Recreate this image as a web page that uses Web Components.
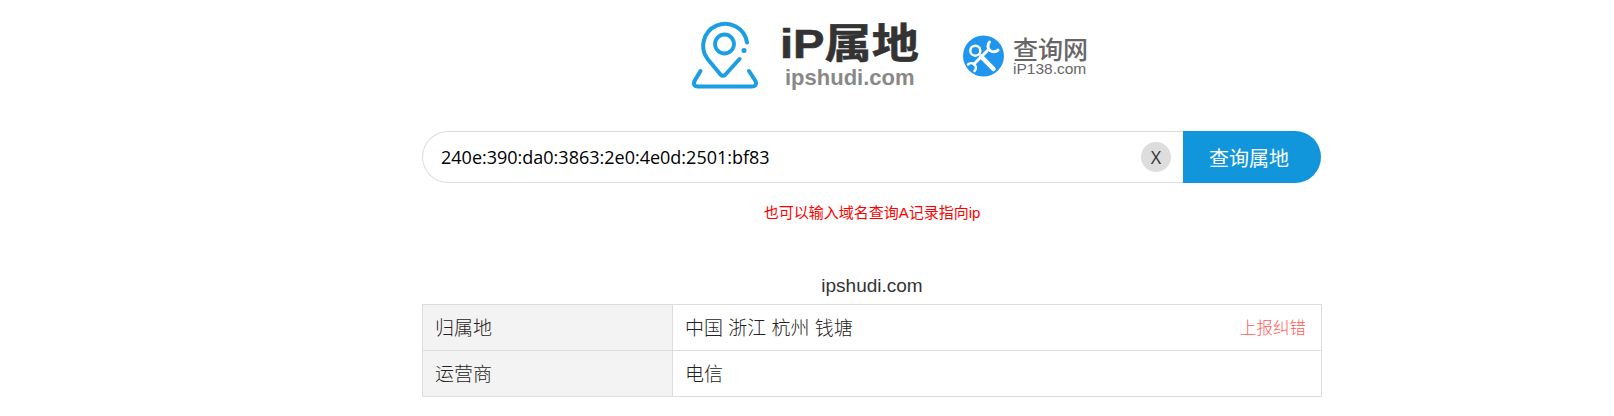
<!DOCTYPE html>
<html lang="zh">
<head>
<meta charset="utf-8">
<title>IP属地查询</title>
<style>
  body { margin: 0; background: #fff; font-family: "Liberation Sans", "Noto Sans CJK SC", sans-serif; color: #333; }
</style>
</head>
<body>
<ip-page>
  <ip-logos></ip-logos>
  <ip-search value="240e:390:da0:3863:2e0:4e0d:2501:bf83"></ip-search>
  <ip-hint>也可以输入域名查询A记录指向ip</ip-hint>
  <ip-result caption="ipshudi.com">
    <ip-row label="归属地" report>中国 浙江 杭州 钱塘</ip-row>
    <ip-row label="运营商">电信</ip-row>
  </ip-result>
</ip-page>

<script>
const CJK = '"Noto Sans CJK SC", sans-serif';

class IpPage extends HTMLElement {
  constructor() {
    super();
    this.attachShadow({mode: 'open'}).innerHTML = `
<style>
:host { display: block; width: 900px; margin-left: 422px; }
</style>
<slot></slot>`;
  }
}

class IpLogos extends HTMLElement {
  constructor() {
    super();
    this.attachShadow({mode: 'open'}).innerHTML = `
<style>
:host { display: flex; height: 131px; padding-left: 270px; box-sizing: border-box; align-items: flex-start; }
.main { display: flex; width: 271px; padding-top: 20px; }
.pin { width: 70px; height: 70px; flex: none; }
.words { margin-left: 18px; display: flex; flex-direction: column; align-items: flex-start; }
.big { font: 700 41px/44px "Liberation Sans", "Noto Sans CJK SC", sans-serif; color: #333; -webkit-text-stroke: .6px #333; margin-top: 2px; white-space: nowrap; transform: scaleX(1.15); transform-origin: left center; }
.small { font: 700 22px/25px "Liberation Sans", sans-serif; color: #888; margin: -1px 0 0 5px; white-space: nowrap; }
.other { display: flex; padding-top: 35px; }
.tool { width: 42px; height: 42px; flex: none; }
.other .words { margin-left: 8px; }
.cn { font: 500 25px/27px "Noto Sans CJK SC", sans-serif; color: #666; white-space: nowrap; }
.en { font: 400 15.500px/14px "Liberation Sans", sans-serif; color: #666; white-space: nowrap; }
</style>
<div class="main">
  <svg class="pin" viewBox="0 0 70 70" fill="none" stroke="#1c9fe2" stroke-linecap="round" stroke-linejoin="round">
    <path stroke-width="4" d="M55 22.500 A22 22 0 1 0 16 39.500 L28.500 54.500 Q31 57 33.500 54.500 L47.500 39"/>
    <circle cx="52" cy="30.500" r="1.500" fill="#1c9fe2" stroke-width="2"/>
    <circle cx="32.500" cy="24" r="9.500" stroke-width="3.800"/>
    <path stroke-width="4" d="M8.500 51 L2.500 61 Q0.500 66.500 6 66.500 L59.500 66.500 Q65.500 66.500 63.500 61 L57 51"/>
  </svg>
  <div class="words">
    <div class="big">iP属地</div>
    <div class="small">ipshudi.com</div>
  </div>
</div>
<div class="other">
  <svg class="tool" viewBox="0 0 42 42">
    <circle cx="20.500" cy="21" r="20.500" fill="#2196ee"/>
    <g fill="none" stroke="#fff" stroke-linecap="round">
      <circle cx="12.300" cy="15.700" r="5" stroke-width="2.500"/>
      <path stroke-width="4.500" d="M18.300 21.700 L30.500 34"/>
      <path stroke-width="3" d="M24.300 15.700 L11 29"/>
      <path stroke-width="3" d="M26.500 7 A5.500 5.500 0 0 0 35 15"/>
      <path stroke-width="2.500" d="M5 29.500 A4.500 4.500 0 0 1 11.500 36"/>
    </g>
  </svg>
  <div class="words">
    <div class="cn">查询网</div>
    <div class="en">iP138.com</div>
  </div>
</div>`;
  }
}

class IpSearch extends HTMLElement {
  constructor() {
    super();
    this.attachShadow({mode: 'open'}).innerHTML = `
<style>
:host { display: flex; width: 900px; height: 52px; box-sizing: border-box; }
.field { flex: 1; display: flex; align-items: center; border: 1px solid #ddd; border-right: 0; border-radius: 26px 0 0 26px; padding: 0 12px 0 18px; }
input { flex: 1; min-width: 0; border: 0; outline: 0; padding: 0; background: none; color: #000; font: 400 18px "Open Sans", ${CJK}; }
.clear { width: 30px; height: 30px; border-radius: 50%; background: #ddd; color: #333; border: 0; padding: 0; font: 400 18px/30px "Open Sans", sans-serif; text-align: center; }
.go { width: 138px; flex: none; border: 0; padding: 0 6px 0 0; margin-right: 1px; background: #1296db; color: #fff; border-radius: 0 26px 26px 0; font: 400 20px "Noto Sans CJK SC", sans-serif; }
</style>
<div class="field">
  <input type="text">
  <button class="clear">X</button>
</div>
<button class="go">查询属地</button>`;
    this.shadowRoot.querySelector('input').value = this.getAttribute('value');
  }
}

class IpHint extends HTMLElement {
  constructor() {
    super();
    this.attachShadow({mode: 'open'}).innerHTML = `
<style>
:host { display: block; margin-top: 20px; height: 20px; text-align: center; color: #f00; font: 400 15px/20px "Liberation Sans", ${CJK}; }
</style>
<slot></slot>`;
  }
}

class IpResult extends HTMLElement {
  constructor() {
    super();
    this.attachShadow({mode: 'open'}).innerHTML = `
<style>
:host { display: block; margin-top: 48px; }
.caption { height: 33px; text-align: center; font: 400 19px/30px "Liberation Sans", ${CJK}; color: #333; }
.rows { border: 1px solid #ddd; border-bottom: 0; }
</style>
<div class="caption"></div>
<div class="rows"><slot></slot></div>`;
    this.shadowRoot.querySelector('.caption').textContent = this.getAttribute('caption');
  }
}

class IpRow extends HTMLElement {
  constructor() {
    super();
    this.attachShadow({mode: 'open'}).innerHTML = `
<style>
:host { display: grid; grid-template-columns: 250px 1fr; grid-template-rows: 45px; height: 46px; box-sizing: border-box; border-bottom: 1px solid #ddd; font: 300 19px/47px "Liberation Sans", ${CJK}; color: #222; }
.label { background: #f3f3f3; border-right: 1px solid #ddd; padding-left: 12px; }
.value { display: flex; justify-content: space-between; padding: 0 15px 0 12px; }
a { color: #ff5a5a; font-size: 16.500px; text-decoration: none; }
</style>
<div class="label"></div>
<div class="value"><span><slot></slot></span></div>`;
    this.shadowRoot.querySelector('.label').textContent = this.getAttribute('label');
    if (this.hasAttribute('report')) {
      const a = document.createElement('a');
      a.href = '#';
      a.textContent = '上报纠错';
      this.shadowRoot.querySelector('.value').appendChild(a);
    }
  }
}

customElements.define('ip-page', IpPage);
customElements.define('ip-logos', IpLogos);
customElements.define('ip-search', IpSearch);
customElements.define('ip-hint', IpHint);
customElements.define('ip-result', IpResult);
customElements.define('ip-row', IpRow);
</script>
</body>
</html>
